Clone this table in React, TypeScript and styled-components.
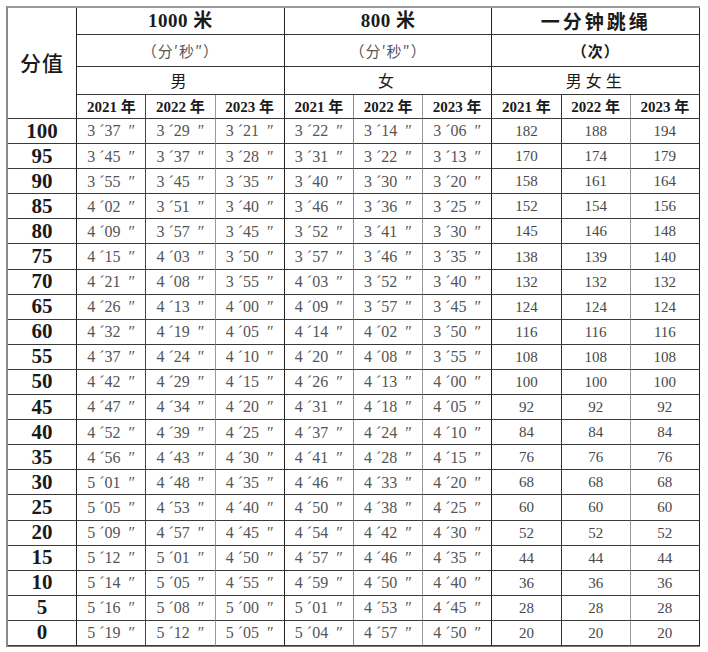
import styled, { createGlobalStyle } from 'styled-components';

const GlobalStyle = createGlobalStyle`
  html, body {
    margin: 0;
    padding: 0;
    background: #ffffff;
  }
`;

// right-edge line colour of each of the 10 columns
const colLines = ['#222', '#444', '#9a9a9a', '#222', '#8a8a8a', '#9a9a9a', '#222', '#333', '#9a9a9a', '#222'];

const scores = [100, 95, 90, 85, 80, 75, 70, 65, 60, 55, 50, 45, 40, 35, 30, 25, 20, 15, 10, 5, 0];

const boys1000 = [
  ['3 37', '3 29', '3 21'],
  ['3 45', '3 37', '3 28'],
  ['3 55', '3 45', '3 35'],
  ['4 02', '3 51', '3 40'],
  ['4 09', '3 57', '3 45'],
  ['4 15', '4 03', '3 50'],
  ['4 21', '4 08', '3 55'],
  ['4 26', '4 13', '4 00'],
  ['4 32', '4 19', '4 05'],
  ['4 37', '4 24', '4 10'],
  ['4 42', '4 29', '4 15'],
  ['4 47', '4 34', '4 20'],
  ['4 52', '4 39', '4 25'],
  ['4 56', '4 43', '4 30'],
  ['5 01', '4 48', '4 35'],
  ['5 05', '4 53', '4 40'],
  ['5 09', '4 57', '4 45'],
  ['5 12', '5 01', '4 50'],
  ['5 14', '5 05', '4 55'],
  ['5 16', '5 08', '5 00'],
  ['5 19', '5 12', '5 05'],
];

const girls800 = [
  ['3 22', '3 14', '3 06'],
  ['3 31', '3 22', '3 13'],
  ['3 40', '3 30', '3 20'],
  ['3 46', '3 36', '3 25'],
  ['3 52', '3 41', '3 30'],
  ['3 57', '3 46', '3 35'],
  ['4 03', '3 52', '3 40'],
  ['4 09', '3 57', '3 45'],
  ['4 14', '4 02', '3 50'],
  ['4 20', '4 08', '3 55'],
  ['4 26', '4 13', '4 00'],
  ['4 31', '4 18', '4 05'],
  ['4 37', '4 24', '4 10'],
  ['4 41', '4 28', '4 15'],
  ['4 46', '4 33', '4 20'],
  ['4 50', '4 38', '4 25'],
  ['4 54', '4 42', '4 30'],
  ['4 57', '4 46', '4 35'],
  ['4 59', '4 50', '4 40'],
  ['5 01', '4 53', '4 45'],
  ['5 04', '4 57', '4 50'],
];

const rope = [
  [182, 188, 194],
  [170, 174, 179],
  [158, 161, 164],
  [152, 154, 156],
  [145, 146, 148],
  [138, 139, 140],
  [132, 132, 132],
  [124, 124, 124],
  [116, 116, 116],
  [108, 108, 108],
  [100, 100, 100],
  [92, 92, 92],
  [84, 84, 84],
  [76, 76, 76],
  [68, 68, 68],
  [60, 60, 60],
  [52, 52, 52],
  [44, 44, 44],
  [36, 36, 36],
  [28, 28, 28],
  [20, 20, 20],
];

const years = ['2021', '2022', '2023'];

const formatTime = (v: string) => {
  const [m, s] = v.split(' ');
  return `${m}\u00a0´${s}\u00a0\u00a0″`;
};

const Page = styled.div`
  padding: 6px 0 0 6px;
`;

const Table = styled.table`
  border-collapse: separate;
  border-spacing: 0;
  table-layout: fixed;
  width: 694px;
  border-top: 2px solid #9a9a9a;
  border-left: 2px solid #8a8a8a;
  border-bottom: 1px solid #777;
  color: #1a1a1a;
  font-family: 'Liberation Serif', 'Noto Sans CJK SC', serif;
`;

const Col = styled.col`
  width: 69.2px;
`;

const Cell = styled.td<{ $line: string }>`
  padding: 0;
  line-height: 1.2;
  text-align: center;
  vertical-align: middle;
  border-right: 1px solid ${(p) => p.$line};
  border-bottom: 1px solid #3a3a3a;
  white-space: nowrap;
`;

const CornerCell = styled(Cell)`
  font-family: 'Noto Sans CJK SC', sans-serif;
  font-size: 21px;
  font-weight: 500;
  letter-spacing: 1px;
`;

const TitleCell = styled(Cell)`
  font-size: 19px;
  font-weight: 700;
  letter-spacing: 0.5px;
`;

const CnTitleCell = styled(TitleCell)`
  font-family: 'Noto Sans CJK SC', sans-serif;
  letter-spacing: 3px;
`;

const UnitCell = styled(Cell)<{ $bold?: boolean }>`
  font-family: 'Noto Sans CJK SC', sans-serif;
  font-size: 15px;
  font-weight: ${(p) => (p.$bold ? 700 : 400)};
  color: ${(p) => (p.$bold ? '#1a1a1a' : '#555')};
  letter-spacing: 1px;
`;

const GroupCell = styled(Cell)`
  font-family: 'Noto Sans CJK SC', sans-serif;
  font-size: 16px;
  letter-spacing: 4px;
`;

const YearCell = styled(Cell)`
  font-size: 15px;
  font-weight: 700;
`;

const ScoreCell = styled(Cell)`
  font-size: 21px;
  font-weight: 700;
  line-height: 1;
`;

const TimeCell = styled(Cell)`
  font-size: 16px;
  color: #555;
`;

const CountCell = styled(Cell)`
  font-size: 15px;
  color: #484848;
`;

const Row = styled.tr<{ $h: number }>`
  height: ${(p) => p.$h}px;
`;

export default function App() {
  return (
    <Page>
      <GlobalStyle />
      <Table>
        <colgroup>
          {colLines.map((_, i) => (
            <Col key={i} />
          ))}
        </colgroup>
        <thead>
          <Row $h={27}>
            <CornerCell $line={colLines[0]} rowSpan={4}>
              分值
            </CornerCell>
            <TitleCell $line={colLines[3]} colSpan={3}>
              1000 米
            </TitleCell>
            <TitleCell $line={colLines[6]} colSpan={3}>
              800 米
            </TitleCell>
            <CnTitleCell $line={colLines[9]} colSpan={3}>
              一分钟跳绳
            </CnTitleCell>
          </Row>
          <Row $h={32}>
            <UnitCell $line={colLines[3]} colSpan={3}>
              （分′秒″）
            </UnitCell>
            <UnitCell $line={colLines[6]} colSpan={3}>
              （分′秒″）
            </UnitCell>
            <UnitCell $line={colLines[9]} colSpan={3} $bold>
              （次）
            </UnitCell>
          </Row>
          <Row $h={28}>
            <GroupCell $line={colLines[3]} colSpan={3}>
              男
            </GroupCell>
            <GroupCell $line={colLines[6]} colSpan={3}>
              女
            </GroupCell>
            <GroupCell $line={colLines[9]} colSpan={3}>
              男女生
            </GroupCell>
          </Row>
          <Row $h={24}>
            {[0, 1, 2].map((g) =>
              years.map((y, j) => (
                <YearCell key={`${g}-${y}`} $line={colLines[1 + g * 3 + j]}>
                  {y} 年
                </YearCell>
              ))
            )}
          </Row>
        </thead>
        <tbody>
          {scores.map((s, i) => (
            <Row key={s} $h={25.1}>
              <ScoreCell $line={colLines[0]}>{s}</ScoreCell>
              {boys1000[i].map((v, j) => (
                <TimeCell key={`b${j}`} $line={colLines[1 + j]}>
                  {formatTime(v)}
                </TimeCell>
              ))}
              {girls800[i].map((v, j) => (
                <TimeCell key={`g${j}`} $line={colLines[4 + j]}>
                  {formatTime(v)}
                </TimeCell>
              ))}
              {rope[i].map((v, j) => (
                <CountCell key={`r${j}`} $line={colLines[7 + j]}>
                  {v}
                </CountCell>
              ))}
            </Row>
          ))}
        </tbody>
      </Table>
    </Page>
  );
}
